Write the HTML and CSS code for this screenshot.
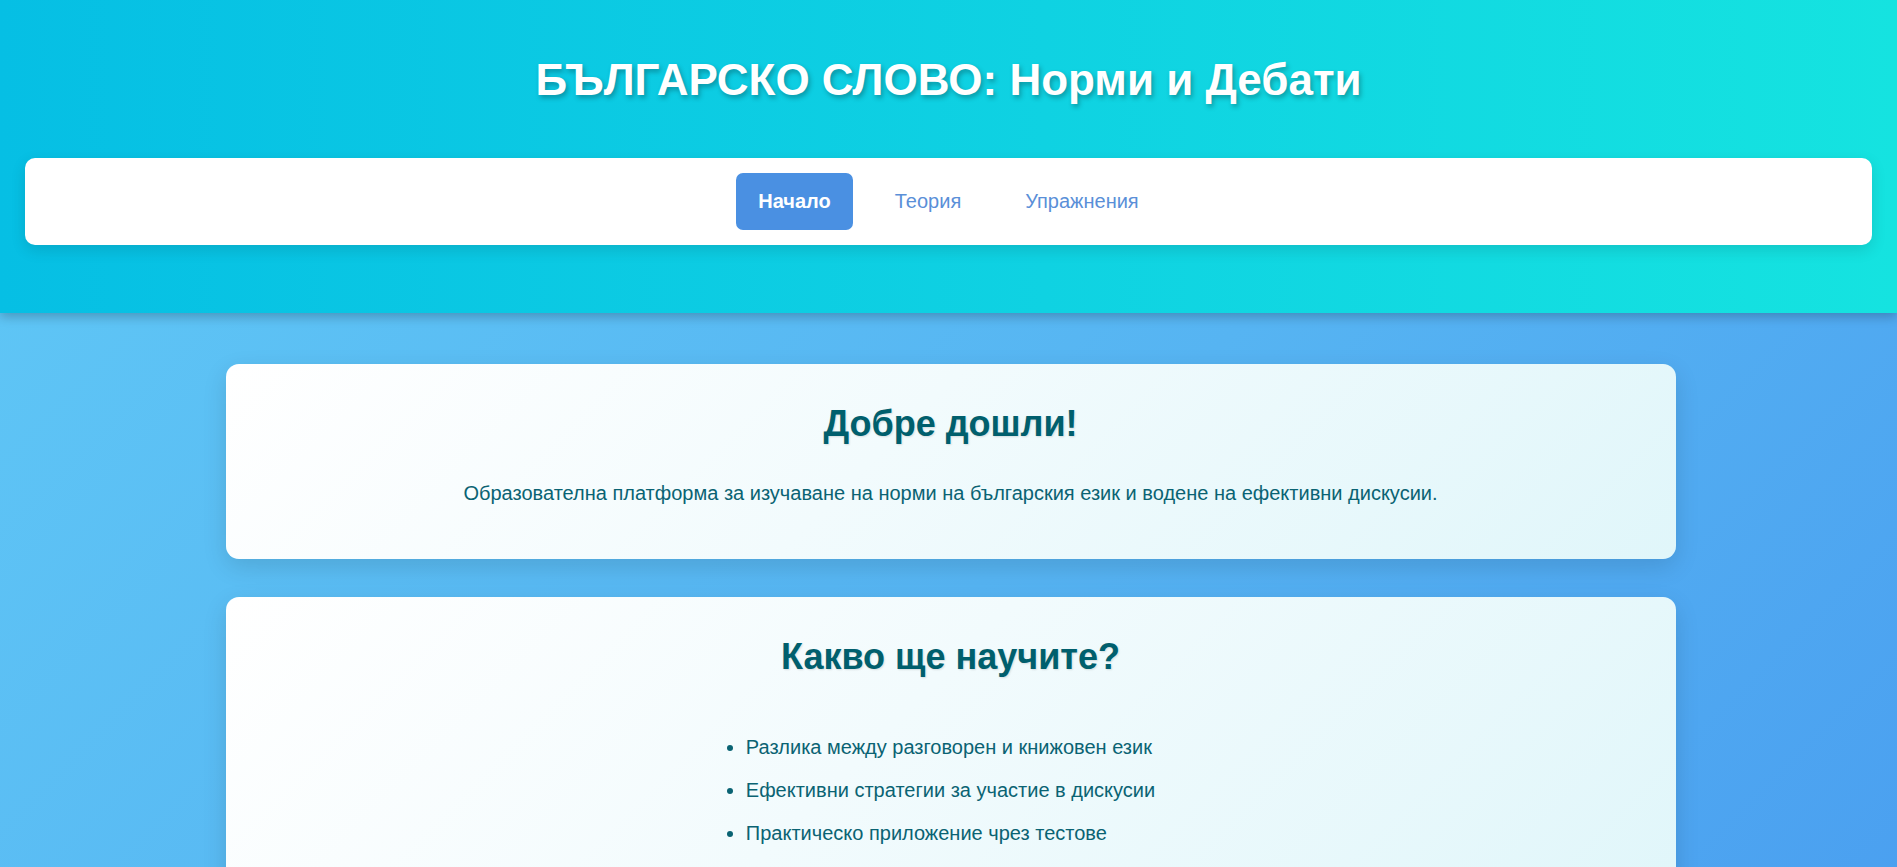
FILE: index.html
```html
<!DOCTYPE html>
<html lang="bg">
<head>
<meta charset="utf-8">
<title>БЪЛГАРСКО СЛОВО: Норми и Дебати</title>
<link rel="stylesheet" href="styles.css">
</head>
<body>
<header class="site-header">
  <h1 class="site-title">БЪЛГАРСКО СЛОВО: Норми и Дебати</h1>
  <nav class="main-nav">
    <a class="nav-link active" href="#">Начало</a>
    <a class="nav-link" href="#">Теория</a>
    <a class="nav-link" href="#">Упражнения</a>
  </nav>
</header>
<main class="content">
  <section class="card">
    <h2 class="card-title">Добре дошли!</h2>
    <p class="card-text">Образователна платформа за изучаване на норми на българския език и водене на ефективни дискусии.</p>
  </section>
  <section class="card">
    <h2 class="card-title">Какво ще научите?</h2>
    <ul class="features">
      <li>Разлика между разговорен и книжовен език</li>
      <li>Ефективни стратегии за участие в дискусии</li>
      <li>Практическо приложение чрез тестове</li>
    </ul>
  </section>
</main>
</body>
</html>
```

FILE: styles.css
```css
* { box-sizing: border-box; }

html, body {
  margin: 0;
  padding: 0;
}

body {
  font-family: "Liberation Sans", Arial, sans-serif;
  background: linear-gradient(135deg, #60c9f6 0%, #56b4f2 55%, #4a9ff0 100%);
  min-height: 100vh;
  color: #0a6373;
}

.site-header {
  background: linear-gradient(90deg, #06bfe4 0%, #0fd2e2 55%, #15e3e0 100%);
  padding: 55px 25px 68px;
  box-shadow: 0 4px 10px rgba(0, 0, 0, 0.22);
  position: relative;
  z-index: 1;
}

.site-title {
  margin: 0 0 54px;
  text-align: center;
  color: #ffffff;
  font-size: 44px;
  line-height: 49px;
  font-weight: 700;
  text-shadow: 2px 3px 5px rgba(0, 0, 0, 0.28);
}

.main-nav {
  background: #ffffff;
  border-radius: 10px;
  padding: 15px;
  display: flex;
  justify-content: center;
  gap: 20px;
  box-shadow: 0 5px 15px rgba(0, 0, 0, 0.12);
}

.nav-link {
  display: block;
  padding: 17px 22px;
  font-size: 20px;
  line-height: 23px;
  color: #5a8fd8;
  text-decoration: none;
  border-radius: 7px;
}

.nav-link.active {
  background: #4a90e2;
  color: #ffffff;
  font-weight: 700;
}

.content {
  max-width: 1454px;
  margin: 0 auto;
  padding: 51px 0 40px 4px;
  display: flex;
  flex-direction: column;
  gap: 38px;
}

.card {
  background: linear-gradient(135deg, #ffffff 0%, #f2fbfd 45%, #e0f6fa 100%);
  border-radius: 13px;
  padding: 40px 40px 48px;
  text-align: center;
  box-shadow: 0 8px 25px rgba(0, 0, 0, 0.12);
  display: flex;
  flex-direction: column;
  align-items: center;
}

.card-title {
  margin: 0 0 32px;
  font-size: 36px;
  line-height: 40px;
  font-weight: 700;
  color: #005f6d;
  text-shadow: 1px 1px 2px rgba(0, 0, 0, 0.12);
}

.card-text {
  margin: 0;
  font-size: 20px;
  line-height: 34.8px;
  color: #0a6373;
}

.features {
  text-align: left;
  margin: 23px 0 0;
  padding: 0 24px;
  font-size: 20px;
  line-height: 31px;
  color: #0a6373;
}

.features li {
  margin-bottom: 12px;
}
```
